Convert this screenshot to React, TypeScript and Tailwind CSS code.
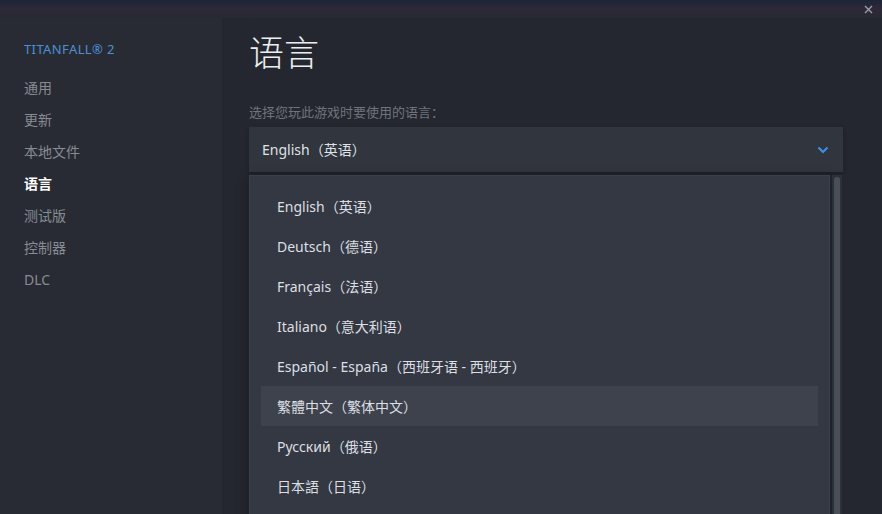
import React from 'react';

const navItems = ['通用', '更新', '本地文件', '语言', '测试版', '控制器', 'DLC'];

const languages = [
  'English（英语）',
  'Deutsch（德语）',
  'Français（法语）',
  'Italiano（意大利语）',
  'Español - España（西班牙语 - 西班牙）',
  '繁體中文（繁体中文）',
  'Русский（俄语）',
  '日本語（日语）',
];

const font = { fontFamily: '"Noto Sans", "Noto Sans CJK SC", sans-serif' };

export default function App() {
  return (
    <div
      className="w-[882px] h-[514px] overflow-hidden flex flex-col bg-[#24272f] text-[#c6cad0]"
      style={font}
    >
      {/* window title strip */}
      <div className="relative h-[18px] shrink-0 bg-gradient-to-b from-[#1c2538] via-[#2e2838] to-[#272a31]">
        <svg
          className="absolute right-[9px] top-[5px] text-[#9aa0a8]"
          width="9"
          height="9"
          viewBox="0 0 9 9"
        >
          <path d="M1 1L8 8M8 1L1 8" stroke="currentColor" strokeWidth="1.4" />
        </svg>
      </div>

      <div className="flex flex-1 min-h-0">
        {/* sidebar */}
        <aside className="w-[222px] shrink-0 bg-[#282b33] pl-[24px] pt-[23px]">
          <div className="text-[13px] leading-[16px] tracking-[0.03em] text-[#4d8fd6] mb-[15px]">
            TITANFALL® 2
          </div>
          <ul>
            {navItems.map((item) => (
              <li
                key={item}
                className={`h-[32px] leading-[32px] text-[14px] ${
                  item === '语言' ? 'text-white font-bold' : 'text-[#878c94]'
                }`}
              >
                {item}
              </li>
            ))}
          </ul>
        </aside>

        {/* main */}
        <main className="flex-1 pl-[27px] pr-[39px]">
          <h1 className="mt-[13px] text-[35px] leading-[44px] font-light text-[#eceef0]">语言</h1>
          <div className="mt-[28px] text-[13px] leading-[18px] text-[#6f747c]">
            选择您玩此游戏时要使用的语言：
          </div>

          <div className="mt-[6px] h-[45px] bg-[#31353e] flex items-center justify-between pl-[13px] pr-[14px] shadow-[0_2px_4px_rgba(0,0,0,0.25)]">
            <span className="text-[14px] text-[#dfe2e6]">English（英语）</span>
            <svg width="12" height="8" viewBox="0 0 12 8" className="text-[#3d8ee6]">
              <path d="M1.5 1.5L6 6L10.5 1.5" stroke="currentColor" strokeWidth="2.2" fill="none" />
            </svg>
          </div>

          {/* dropdown list */}
          <div className="mt-[3px] flex gap-[2px] h-[400px]">
            <div className="w-[581px] bg-[#343842] border border-[#3c404a] border-b-0 px-[11px] pt-[10px] shadow-[0_4px_12px_rgba(0,0,0,0.35)]">
              {languages.map((lang) => (
                <div
                  key={lang}
                  className={`h-[40px] flex items-center pl-[16px] text-[14px] text-[#dcdfe3] ${
                    lang.startsWith('繁體') ? 'bg-[#3e424c]' : ''
                  }`}
                >
                  {lang}
                </div>
              ))}
            </div>
            <div className="w-[10px] bg-[#2c3038] flex justify-center pt-[2px]">
              <div className="w-[6px] h-full bg-[#4a4e57] rounded-t-[3px]" />
            </div>
          </div>
        </main>
      </div>
    </div>
  );
}
